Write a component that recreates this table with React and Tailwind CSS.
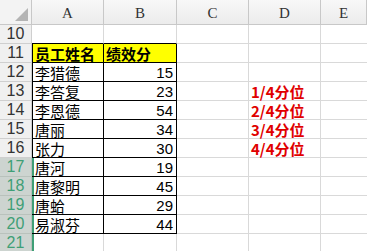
import React from "react";

// === DATA ===
const cols = ["A", "B", "C", "D", "E"];

const rows = [
  { n: 10 },
  { n: 11, a: "员工姓名", b: "绩效分", head: true },
  { n: 12, a: "李猎德", b: 15 },
  { n: 13, a: "李答复", b: 23, d: "1/4分位" },
  { n: 14, a: "李恩德", b: 54, d: "2/4分位" },
  { n: 15, a: "唐丽", b: 34, d: "3/4分位" },
  { n: 16, a: "张力", b: 30, d: "4/4分位" },
  { n: 17, a: "唐河", b: 19 },
  { n: 18, a: "唐黎明", b: 45 },
  { n: 19, a: "唐蛤", b: 29 },
  { n: 20, a: "易淑芬", b: 44 },
  { n: 21 },
];

const cjk = "font-['Noto_Sans_CJK_SC',sans-serif]";

const CornerIcon = () => (
  <svg width="13" height="13" viewBox="0 0 13 13" className="absolute right-[3px] bottom-[3px]">
    <polygon points="13,0 13,13 0,13" fill="#b4b4b4" />
  </svg>
);

export default function App() {
  return (
    <div className="w-[367px] h-[251px] overflow-hidden bg-white">
      <div className="grid grid-cols-[32px_72px_73px_72px_72px_1fr] grid-rows-[25px_repeat(12,19px)]">
        {/* Column headers */}
        <div className="relative bg-[#f3f3f3] border-r border-b border-[#c8c8c8]">
          <CornerIcon />
        </div>
        {cols.map((c) => (
          <div
            key={c}
            className="flex items-end justify-center pb-[2px] bg-gradient-to-b from-[#f8f8f8] to-[#ececec] border-r border-b border-[#c8c8c8] font-['Liberation_Serif',serif] text-[15px] leading-[18px] text-[#333]"
          >
            {c}
          </div>
        ))}

        {/* Rows */}
        {rows.map((r) => {
          const sel = r.n >= 17;
          const inTable = r.n >= 11 && r.n <= 20;
          const aboveTable = r.n === 10;
          return (
            <React.Fragment key={r.n}>
              <div
                className={`flex items-center justify-center border-r border-b font-['Liberation_Sans',sans-serif] text-[16px] leading-[18px] ${
                  sel
                    ? "bg-[#cdd4d0] text-[#3f9f76] border-[#b9c2bc]"
                    : "bg-[#f0f0f0] text-[#333] border-[#cfcfcf]"
                }`}
              >
                {r.n}
              </div>

              {/* A */}
              <div
                className={`flex items-center pl-[3px] border-r border-b ${cjk} text-[15px] leading-[17px] whitespace-nowrap ${
                  inTable || aboveTable ? "border-black" : "border-[#d9d9d9]"
                } ${aboveTable ? "border-r-[#d9d9d9]" : ""} ${r.head ? "bg-[#ffff00] font-bold" : ""} ${
                  sel ? "shadow-[inset_2px_0_0_#3f9f76]" : inTable ? "shadow-[inset_1px_0_0_#000]" : ""
                }`}
              >
                {r.a}
              </div>

              {/* B */}
              <div
                className={`flex items-center border-r border-b leading-[17px] whitespace-nowrap ${
                  r.head
                    ? `${cjk} text-[15px] bg-[#ffff00] font-bold justify-start pl-[2px]`
                    : "font-['Liberation_Sans',sans-serif] justify-end pr-[3px] text-[15px]"
                } ${inTable ? "border-black" : aboveTable ? "border-b-black border-r-[#d9d9d9]" : "border-[#d9d9d9]"}`}
              >
                {r.b}
              </div>

              {/* C */}
              <div className="border-r border-b border-[#d9d9d9]" />

              {/* D */}
              <div
                className={`flex items-end pl-[2px] border-r border-b border-[#d9d9d9] ${cjk} text-[15px] leading-[17px] font-bold text-[#e00000] whitespace-nowrap`}
              >
                {r.d}
              </div>

              {/* E */}
              <div className="border-b border-[#d9d9d9]" />
            </React.Fragment>
          );
        })}
      </div>
    </div>
  );
}
